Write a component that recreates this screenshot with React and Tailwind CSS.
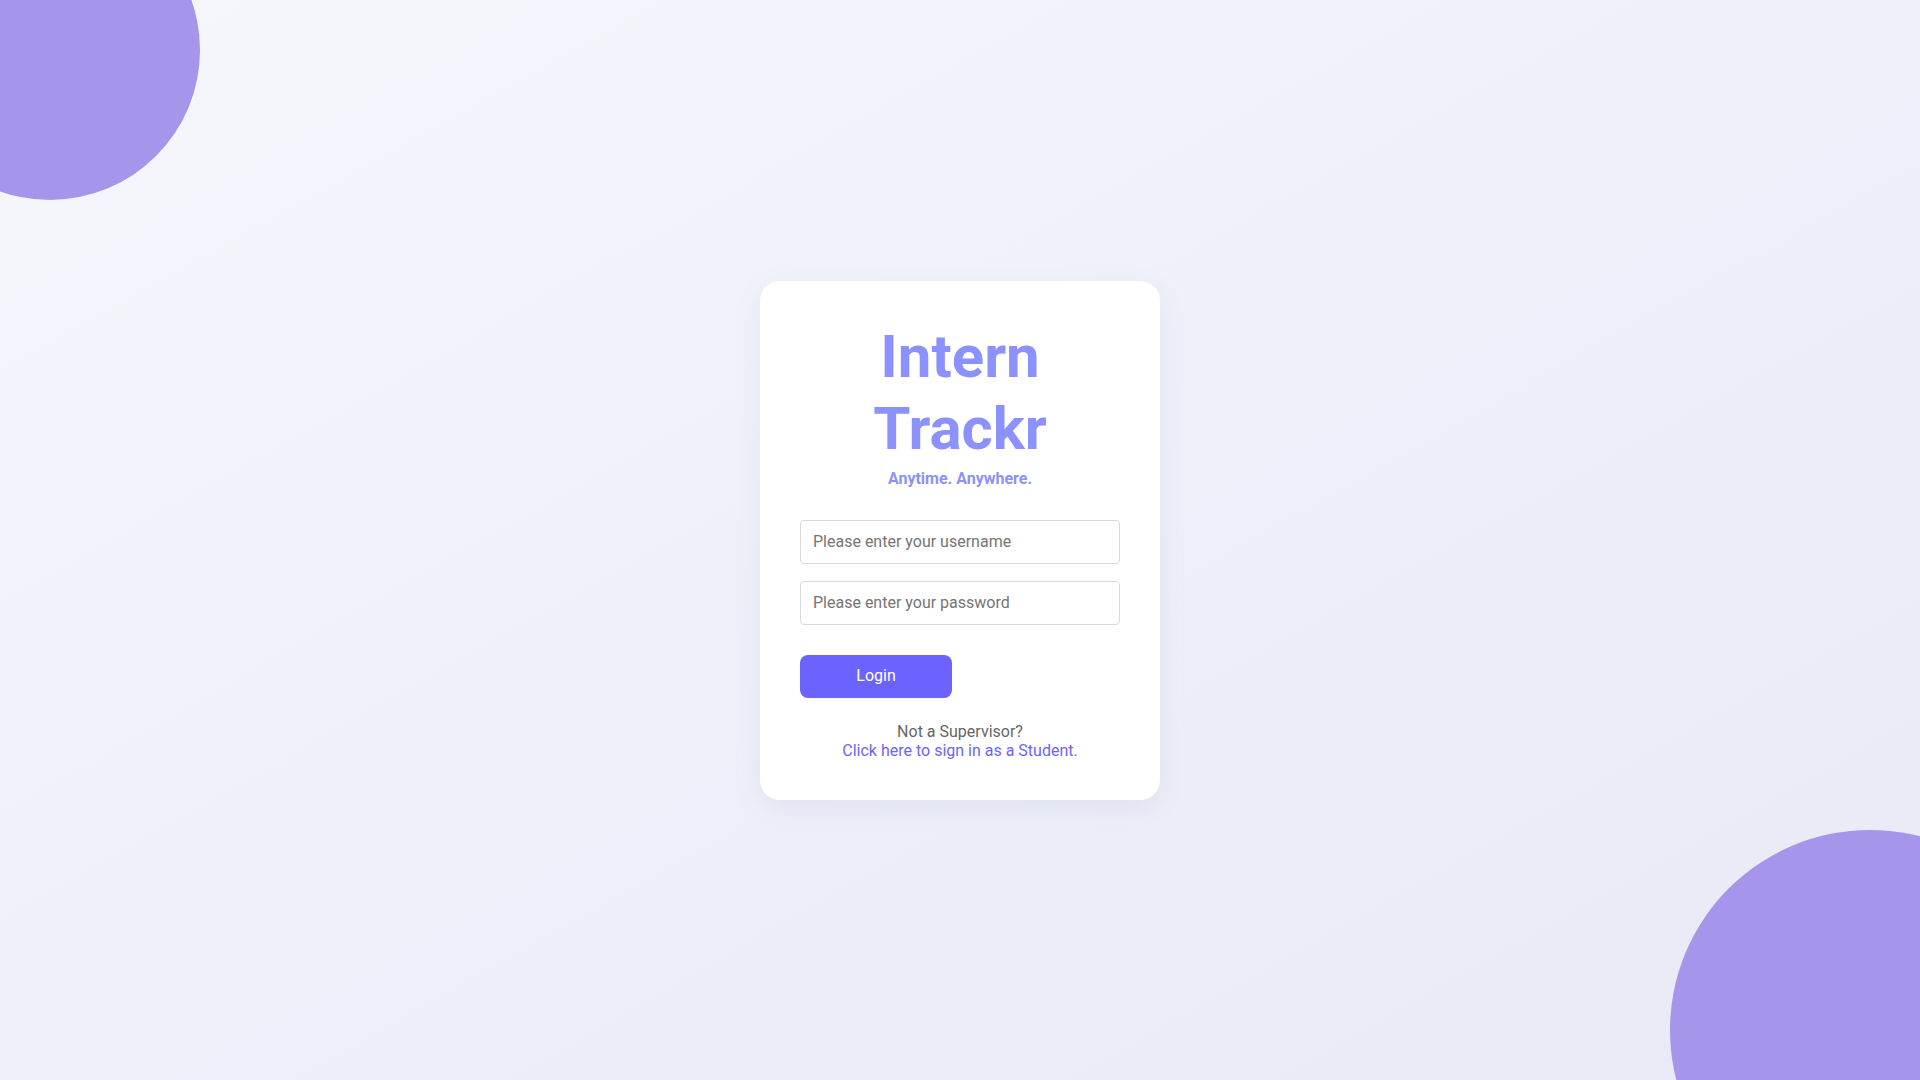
export default function App() {
  return (
    <div
      className="relative min-h-screen w-full overflow-hidden bg-gradient-to-br from-[#f6f7fc] to-[#e7e9f5] flex items-center justify-center"
      style={{ fontFamily: "Roboto, 'Liberation Sans', sans-serif" }}
    >
      {/* decorative circles */}
      <div className="absolute -top-[100px] -left-[100px] w-[300px] h-[300px] rounded-full bg-[#a695eb]" />
      <div className="absolute -bottom-[150px] -right-[150px] w-[400px] h-[400px] rounded-full bg-[#a695eb]" />

      {/* Login Card */}
      <div className="relative w-[400px] bg-white rounded-[20px] p-10 shadow-[0_8px_30px_rgba(80,90,160,0.08)] text-center">
        <h1 className="text-6xl leading-[72px] font-bold text-[#8b91fd]">
          Intern
          <br />
          Trackr
        </h1>
        <p className="mt-0.5 text-base leading-6 font-bold text-[#8b91fd]">
          Anytime. Anywhere.
        </p>

        <form className="mt-[29px] flex flex-col text-left" onSubmit={(e) => e.preventDefault()}>
          <input
            type="text"
            placeholder="Please enter your username"
            className="h-[44px] w-full rounded-[4px] border border-[#d9d9d9] px-3 text-base text-[#333] placeholder:text-[#757575] outline-none"
          />
          <input
            type="password"
            placeholder="Please enter your password"
            className="mt-[17px] h-[44px] w-full rounded-[4px] border border-[#d9d9d9] px-3 text-base text-[#333] placeholder:text-[#757575] outline-none"
          />
          <button
            type="submit"
            className="mt-[30px] h-[43px] w-[152px] rounded-lg bg-[#6c63ff] text-base text-white"
          >
            Login
          </button>
        </form>

        <div className="mt-6 text-base leading-[19px]">
          <p className="text-[#666]">Not a Supervisor?</p>
          <a href="#" className="text-[#6c63ff]">
            Click here to sign in as a Student.
          </a>
        </div>
      </div>
    </div>
  );
}
